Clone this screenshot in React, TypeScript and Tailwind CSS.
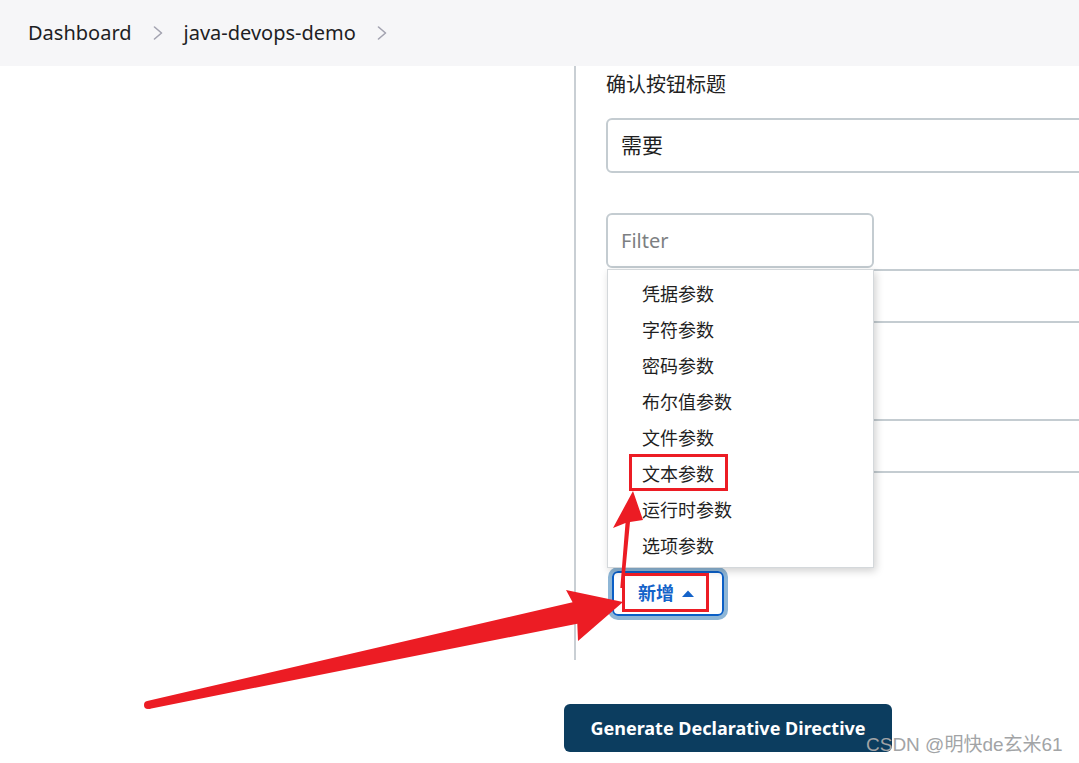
import React from "react";

const ITEMS = [
  "凭据参数",
  "字符参数",
  "密码参数",
  "布尔值参数",
  "文件参数",
  "文本参数",
  "运行时参数",
  "选项参数",
];

function Crumb() {
  return (
    <svg width="10" height="14" viewBox="0 0 10 14" className="shrink-0">
      <polyline
        points="1.5,1 8.5,7 1.5,13"
        fill="none"
        stroke="#a3a3b0"
        strokeWidth="1.6"
        strokeLinejoin="round"
        strokeLinecap="round"
      />
    </svg>
  );
}

// Red screenshot annotations drawn on top of the page.
function Annotations() {
  return (
    <svg
      className="pointer-events-none absolute inset-0 z-30"
      width="1079"
      height="763"
      viewBox="0 0 1079 763"
    >
      <rect x="630.5" y="455.5" width="96" height="34" fill="none" stroke="#ec1c24" strokeWidth="3" />
      <rect x="623.5" y="574.5" width="84" height="36" fill="none" stroke="#ec1c24" strokeWidth="3" />
      <circle cx="148" cy="705" r="4" fill="#ec1c24" />
      <polygon
        fill="#ec1c24"
        points="147.2,701.1 572.6,602.3 566,590 623,602 578,641 577.3,623.7 148.9,708.9"
      />
      <polygon
        fill="#ec1c24"
        points="620.3,588 623.7,588 630,522 643,520 633,491 613,528 625.5,523"
      />
    </svg>
  );
}

export default function App() {
  return (
    <div className="relative h-[763px] w-[1079px] overflow-hidden bg-white font-['Noto_Sans','Noto_Sans_CJK_SC',sans-serif] text-[#1e1e24]">
      <header className="flex h-[66px] items-center bg-[#f6f6f8] pl-[28px] text-[20px]">
        <span>Dashboard</span>
        <span className="ml-[21px]">
          <Crumb />
        </span>
        <span className="ml-[21px]">java-devops-demo</span>
        <span className="ml-[21px]">
          <Crumb />
        </span>
      </header>

      <div className="flex">
        <div className="w-[574px] shrink-0" />
        <div className="w-[520px] shrink-0 border-l-2 border-[#c9cfd4] pb-[44px] pl-[30px]">
          <div className="mt-[5px] text-[20px] leading-[28px] text-[#222]">
            确认按钮标题
          </div>
          <div className="mt-[19px] flex h-[55px] w-[520px] items-center rounded-[6px] border-2 border-[#c4ccd1] pl-[13px] text-[21px] text-[#1e1e1e]">
            需要
          </div>

          <div className="relative mt-[40px]">
            <div className="flex h-[55px] w-[268px] items-center rounded-[6px] border-2 border-[#c4ccd1] pl-[13px] text-[20px] text-[#7d7f82]">
              Filter
            </div>
            {/* Open add-parameter menu */}
            <div className="absolute left-[1px] top-[56px] z-20 h-[299px] w-[267px] border border-[#d4d8db] bg-white pt-[6px] shadow-[2px_3px_8px_rgba(0,0,0,0.18)]">
              {ITEMS.map((label) => (
                <div
                  key={label}
                  className="h-[36px] pl-[34px] text-[18px] leading-[36px] text-[#1f1f1f]"
                >
                  {label}
                </div>
              ))}
            </div>
          </div>

          <div className="ml-[12px] mt-[1px] h-[54px] w-[520px] rounded-[6px] border-2 border-[#c4ccd1]" />
          <div className="ml-[12px] mt-[96px] h-[54px] w-[520px] rounded-[6px] border-2 border-[#c4ccd1]" />

          <button className="ml-[6px] mt-[98px] flex h-[45px] w-[112px] items-center rounded-[6px] border-2 border-[#0b5fc6] pl-[24px] text-[18px] font-bold text-[#1463c9] shadow-[0_0_0_4px_#8eb6d6]">
            新增
            <svg width="12" height="7" viewBox="0 0 12 7" className="ml-[8px]">
              <polygon points="0,7 6,0.5 12,7" fill="#1463c9" />
            </svg>
          </button>
        </div>
      </div>

      <button className="ml-[564px] mt-[44px] flex h-[48px] w-[328px] items-center justify-center rounded-[6px] bg-[#0c3d5f] text-[18px] font-bold text-white">
        Generate Declarative Directive
      </button>

      <div className="absolute left-[866px] top-[732px] z-40 font-['Liberation_Sans','Noto_Sans_CJK_SC',sans-serif] text-[19px] leading-[26px] text-[#a2a4a6]">
        CSDN @明快de玄米61
      </div>

      <Annotations />
    </div>
  );
}
